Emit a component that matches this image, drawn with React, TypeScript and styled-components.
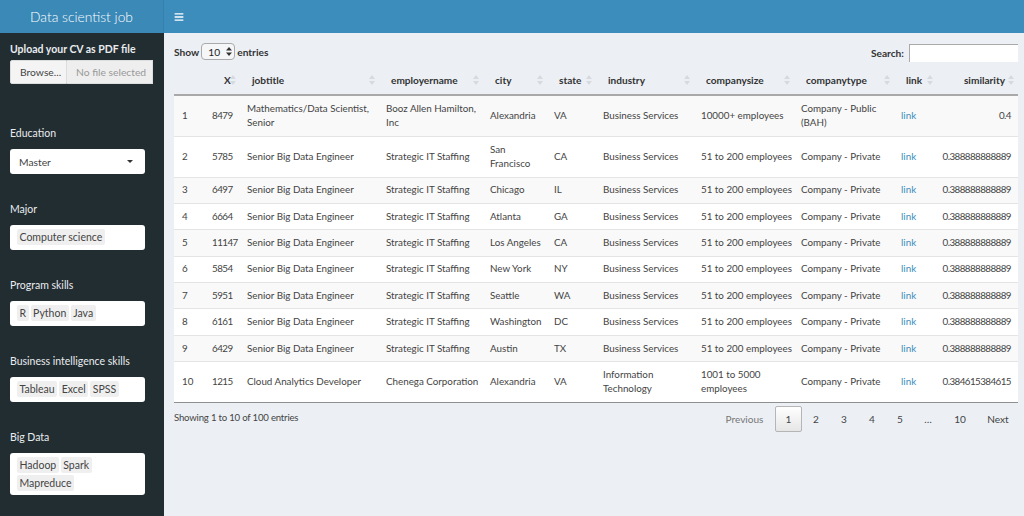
import React from "react";
import styled, { createGlobalStyle } from "styled-components";
import { FaBars } from "react-icons/fa";

const FONT = `"Lato", "Noto Sans", sans-serif`;

const Global = createGlobalStyle`
  html, body { margin: 0; padding: 0; height: 100%; background: #ecf0f5; }
  body { font-family: ${FONT}; font-size: 10.5px; color: #333; overflow: hidden; }
  * { box-sizing: border-box; }
`;

const Page = styled.div`
  width: 1024px;
  height: 516px;
  display: grid;
  grid-template-columns: 164px 1fr;
  grid-template-rows: 33px 1fr;
  overflow: hidden;
`;
const Logo = styled.div`
  color: #fff;
  font: 300 13.8px "Lato", sans-serif;
  display: flex;
  align-items: center;
  justify-content: center;
  background: #3a89b7;
  border-right: 1px solid #3580ac;
`;
const TopBar = styled.div`
  background: #3c8dbc;
  color: #fff;
  display: flex;
  align-items: center;
  padding-left: 10px;
  font-size: 10px;
`;
const Sidebar = styled.aside`
  background: #222d32;
  color: #e9ecee;
  padding: 10px 10px 0;
  display: flex;
  flex-direction: column;
`;
const Field = styled.div<{ $h: number; $gap: number }>`
  height: ${(p) => p.$h}px;
  display: flex;
  flex-direction: column;
  gap: ${(p) => p.$gap}px;
`;
const Label = styled.div<{ $bold?: boolean }>`
  font-size: 10.5px;
  line-height: 12px;
  font-weight: ${(p) => (p.$bold ? 700 : 400)};
  white-space: nowrap;
`;
const FileRow = styled.div`
  display: flex;
  width: 143px;
  height: 24px;
  font-size: 10.3px;
`;
const Browse = styled.div`
  width: 57px;
  background: #f4f4f4;
  color: #444;
  padding-left: 9px;
  border: 1px solid #ddd;
  border-radius: 2px 0 0 2px;
  line-height: 22px;
`;
const FileName = styled.div`
  flex: 1;
  background: #eeeeee;
  color: #999;
  padding-left: 9px;
  line-height: 22px;
  border: 1px solid #ddd;
  border-left: 0;
`;
const InputBox = styled.div`
  width: 135px;
  min-height: 25px;
  background: #fff;
  border-radius: 3px;
  color: #333;
  padding: 4px 7px;
  display: flex;
  flex-wrap: wrap;
  align-content: flex-start;
  gap: 2px;
`;
const SelectBox = styled(InputBox)`
  justify-content: space-between;
  padding: 0 9px 0 9px;
  align-items: center;
  align-content: center;
  font-size: 10.3px;
  color: #444;
`;
const Caret = styled.span`
  width: 0;
  height: 0;
  margin-right: 3px;
  border-left: 3.5px solid transparent;
  border-right: 3.5px solid transparent;
  border-top: 3.5px solid #333;
`;
const Tag = styled.span`
  background: #efefef;
  border-radius: 2px;
  color: #444;
  font-size: 10.5px;
  line-height: 16px;
  height: 16px;
  padding: 0 2.5px;
  white-space: nowrap;
`;
const Main = styled.main`
  padding: 10px 6px 0 10px;
`;
const Controls = styled.div`
  display: flex;
  justify-content: space-between;
  align-items: flex-start;
  height: 26px;
`;
const LenLabel = styled.div`
  display: flex;
  align-items: center;
  gap: 2px;
  font-weight: 700;
  font-size: 10.2px;
  height: 17px;
`;
const LenSelect = styled.div`
  width: 34px;
  height: 17px;
  background: #f5f6f8;
  border: 1px solid #aaa;
  border-radius: 4px;
  display: flex;
  align-items: center;
  justify-content: space-between;
  padding: 0 2px 0 6px;
  font-weight: 400;
  color: #222;
`;
const Spin = styled.svg`
  width: 6px;
  height: 9px;
  fill: #333;
`;
const SearchWrap = styled.div`
  display: flex;
  align-items: center;
  gap: 5px;
  font-weight: 700;
  font-size: 10.2px;
  margin-top: 1px;
`;
const SearchInput = styled.div`
  width: 109px;
  height: 18px;
  background: #fff;
  border: 1px solid #aaa;
  border-right: 0;
  border-bottom: 0;
`;
const Table = styled.table`
  width: 844px;
  table-layout: fixed;
  border-collapse: collapse;
  font-size: 9.8px;
  line-height: 14px;
`;
const Col = styled.col<{ $w: number }>`
  width: ${(p) => p.$w}px;
`;
const Th = styled.th<{ $right?: boolean }>`
  height: 26px;
  padding: 0 13px 3px 12px;
  font-size: 10.1px;
  font-weight: 700;
  color: #333;
  text-align: ${(p) => (p.$right ? "right" : "left")};
  position: relative;
  border-bottom: 2px solid #a9a9a9;
  white-space: nowrap;
`;
const Sort = styled.svg`
  position: absolute;
  right: 4px;
  top: 6px;
  width: 6px;
  height: 10px;
  fill: #d6dade;
`;
const Tr = styled.tr<{ $odd: boolean; $h: number }>`
  height: ${(p) => p.$h}px;
  background: ${(p) => (p.$odd ? "#f9f9f9" : "#fff")};
  border-bottom: 1px solid #e4e4e4;
  &:last-child { border-bottom: 1px solid #8f8f8f; }
`;
const Td = styled.td`
  padding: 0 2px 2px 7px;
  color: #444;
  white-space: pre;
  vertical-align: middle;
  &:first-child { padding-left: 8px; }
`;
const NumTd = styled.td`
  padding: 0 8px 2px 0;
  color: #444;
  text-align: right;
  font-size: 9.8px;
  letter-spacing: -0.55px;
  white-space: nowrap;
  vertical-align: middle;
  &:last-child { padding-right: 7px; }
`;
const A = styled.a`
  color: #3c8dbc;
`;
const Footer = styled.div`
  display: flex;
  justify-content: space-between;
  align-items: flex-start;
  padding-top: 3px;
`;
const Info = styled.div`
  font-size: 9.6px;
  letter-spacing: -0.2px;
  color: #444;
  padding-top: 6px;
`;
const Pager = styled.div`
  display: flex;
  align-items: center;
  font-size: 10.1px;
  color: #444;
`;
const PageBtn = styled.div<{ $active?: boolean; $dim?: boolean; $w: number }>`
  width: ${(p) => p.$w}px;
  height: 26px;
  display: flex;
  align-items: center;
  justify-content: center;
  color: ${(p) => (p.$dim ? "#777" : "#444")};
  ${(p) =>
    p.$active
      ? `border: 1px solid #b5b5b5; border-radius: 2px; background: linear-gradient(#fff, #e6e6e6);`
      : ""}
`;

const widths = [38, 28, 139, 104, 64, 49, 98, 100, 100, 43, 81];
const heads = ["", "X", "jobtitle", "employername", "city", "state", "industry", "companysize", "companytype", "link", "similarity"];
const rightCols = new Set([1, 10]);

const BH = "Business Services";
const SE = "Senior Big Data Engineer";
const ST = "Strategic IT Staffing";
const SZ = "51 to 200 employees";
const CP = "Company - Private";
const S = "0.388888888889";
type Row = { n: string; x: string; c: string[]; sim: string; h: number };
const rows: Row[] = [
  { n: "1", x: "8479", c: ["Mathematics/Data Scientist,\nSenior", "Booz Allen Hamilton,\nInc", "Alexandria", "VA", BH, "10000+ employees", "Company - Public\n(BAH)"], sim: "0.4", h: 41 },
  { n: "2", x: "5785", c: [SE, ST, "San\nFrancisco", "CA", BH, SZ, CP], sim: S, h: 41 },
  { n: "3", x: "6497", c: [SE, ST, "Chicago", "IL", BH, SZ, CP], sim: S, h: 26.4 },
  { n: "4", x: "6664", c: [SE, ST, "Atlanta", "GA", BH, SZ, CP], sim: S, h: 26.4 },
  { n: "5", x: "11147", c: [SE, ST, "Los Angeles", "CA", BH, SZ, CP], sim: S, h: 26.4 },
  { n: "6", x: "5854", c: [SE, ST, "New York", "NY", BH, SZ, CP], sim: S, h: 26.4 },
  { n: "7", x: "5951", c: [SE, ST, "Seattle", "WA", BH, SZ, CP], sim: S, h: 26.4 },
  { n: "8", x: "6161", c: [SE, ST, "Washington", "DC", BH, SZ, CP], sim: S, h: 26.4 },
  { n: "9", x: "6429", c: [SE, ST, "Austin", "TX", BH, SZ, CP], sim: S, h: 26.4 },
  { n: "10", x: "1215", c: ["Cloud Analytics Developer", "Chenega Corporation", "Alexandria", "VA", "Information\nTechnology", "1001 to 5000\nemployees", CP], sim: "0.384615384615", h: 41 },
];

const pages = [
  { t: "Previous", w: 61, dim: true },
  { t: "1", w: 27, active: true },
  { t: "2", w: 28 },
  { t: "3", w: 28 },
  { t: "4", w: 28 },
  { t: "5", w: 28 },
  { t: "…", w: 28 },
  { t: "10", w: 36 },
  { t: "Next", w: 40 },
];

const fields = [
  { label: "Major", tags: ["Computer science"] },
  { label: "Program skills", tags: ["R", "Python", "Java"] },
  { label: "Business intelligence skills", tags: ["Tableau", "Excel", "SPSS"] },
  { label: "Big Data", tags: ["Hadoop", "Spark", "Mapreduce"] },
];

const SortIcon = () => (
  <Sort viewBox="0 0 6 10">
    <path d="M3 0 6 4H0zM3 10 0 6h6z" />
  </Sort>
);

export default function App() {
  return (
    <Page>
      <Global />
      <Logo>Data scientist job</Logo>
      <TopBar><FaBars /></TopBar>
      <Sidebar>
        <Field $h={84} $gap={5}>
          <Label $bold>Upload your CV as PDF file</Label>
          <FileRow>
            <Browse>Browse...</Browse>
            <FileName>No file selected</FileName>
          </FileRow>
        </Field>
        <Field $h={76} $gap={10}>
          <Label>Education</Label>
          <SelectBox>
            Master
            <Caret />
          </SelectBox>
        </Field>
        {fields.map((f) => (
          <Field key={f.label} $h={76} $gap={10}>
            <Label>{f.label}</Label>
            <InputBox>
              {f.tags.map((t) => (
                <Tag key={t}>{t}</Tag>
              ))}
            </InputBox>
          </Field>
        ))}
      </Sidebar>
      <Main>
        <Controls>
          <LenLabel>
            Show
            <LenSelect>
              10
              <Spin viewBox="0 0 6 9">
                <path d="M3 0 6 3.5H0zM3 9 0 5.5h6z" />
              </Spin>
            </LenSelect>
            entries
          </LenLabel>
          <SearchWrap>
            Search:
            <SearchInput />
          </SearchWrap>
        </Controls>
        <Table>
          <colgroup>
            {widths.map((w, i) => (
              <Col key={i} $w={w} />
            ))}
          </colgroup>
          <thead>
            <tr>
              {heads.map((h, i) => (
                <Th key={i} $right={rightCols.has(i)}>
                  {h}
                  {h && <SortIcon />}
                </Th>
              ))}
            </tr>
          </thead>
          <tbody>
            {rows.map((r) => (
              <Tr key={r.n} $odd={Number(r.n) % 2 === 1} $h={r.h}>
                <Td>{r.n}</Td>
                <NumTd>{r.x}</NumTd>
                {r.c.map((v, j) => (
                  <Td key={j}>{v}</Td>
                ))}
                <Td>
                  <A>link</A>
                </Td>
                <NumTd>{r.sim}</NumTd>
              </Tr>
            ))}
          </tbody>
        </Table>
        <Footer>
          <Info>Showing 1 to 10 of 100 entries</Info>
          <Pager>
            {pages.map((p) => (
              <PageBtn key={p.t} $w={p.w} $active={p.active} $dim={p.dim}>
                {p.t}
              </PageBtn>
            ))}
          </Pager>
        </Footer>
      </Main>
    </Page>
  );
}
